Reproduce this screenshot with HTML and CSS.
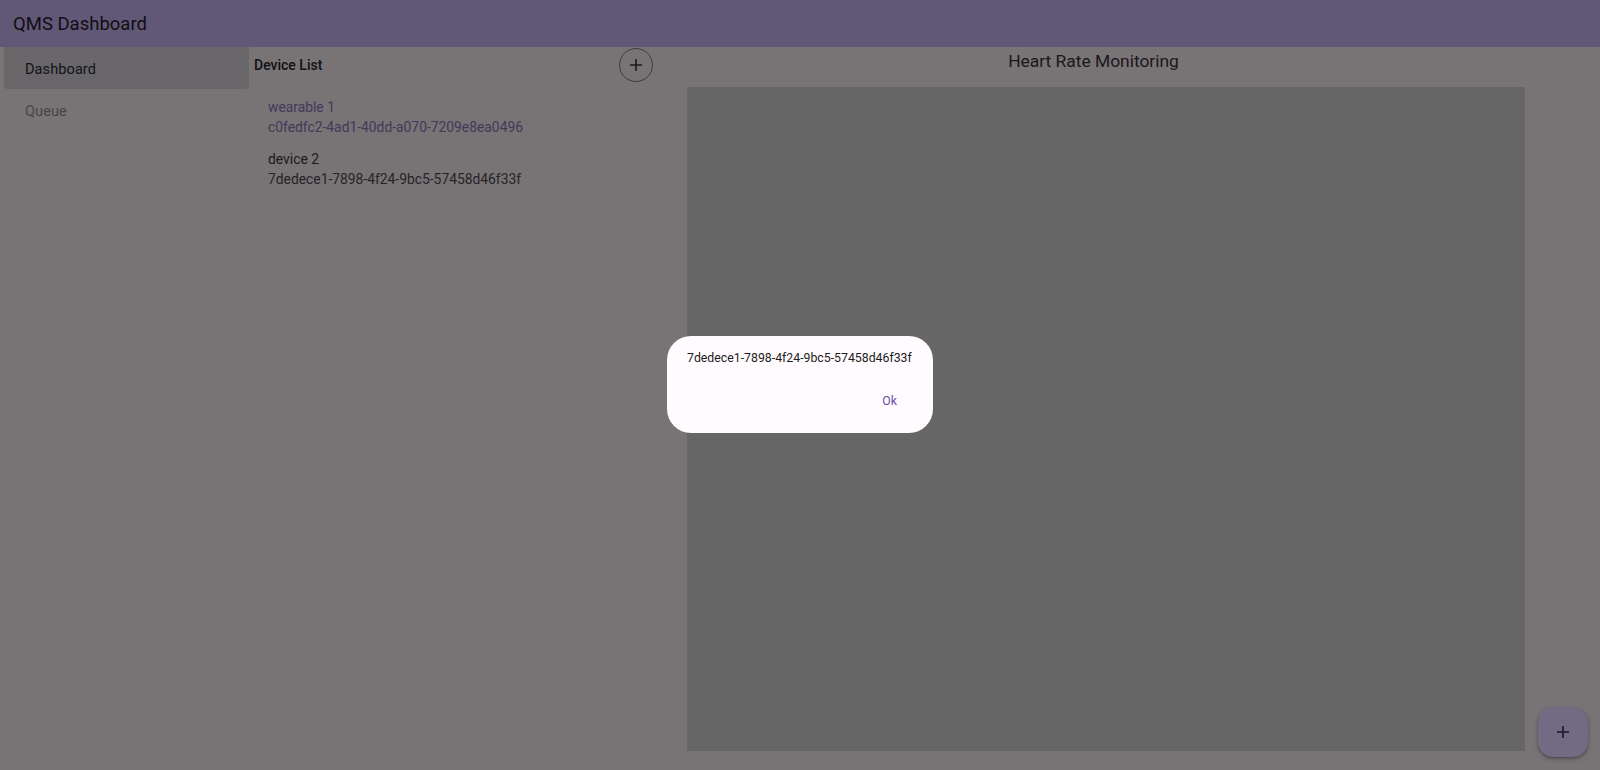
FILE: index.html
```html
<!DOCTYPE html>
<html lang="en">
<head>
<meta charset="utf-8">
<title>QMS Dashboard</title>
<link rel="stylesheet" href="styles.css">
</head>
<body>
<header class="appbar"><span class="appbar-title">QMS Dashboard</span></header>
<div class="main">
  <nav class="sidebar">
    <div class="nav-item active">Dashboard</div>
    <div class="nav-item">Queue</div>
  </nav>
  <section class="devices">
    <div class="devices-head">
      <span class="devices-title">Device List</span>
      <button class="circle-btn" aria-label="Add device">
        <svg width="14" height="14" viewBox="0 0 14 14"><path d="M7 1v12M1 7h12" stroke="#1b1a1e" stroke-width="1.6" fill="none"/></svg>
      </button>
    </div>
    <ul class="device-list">
      <li class="device selected">
        <div class="device-name">wearable 1</div>
        <div class="device-id">c0fedfc2-4ad1-40dd-a070-7209e8ea0496</div>
      </li>
      <li class="device">
        <div class="device-name">device 2</div>
        <div class="device-id">7dedece1-7898-4f24-9bc5-57458d46f33f</div>
      </li>
    </ul>
  </section>
  <section class="chart-panel">
    <h2 class="chart-title">Heart Rate Monitoring</h2>
    <div class="chart"></div>
  </section>
</div>
<button class="fab" aria-label="Add">
  <svg width="14" height="14" viewBox="0 0 14 14"><path d="M7 1v12M1 7h12" stroke="#1d1530" stroke-width="1.6" fill="none"/></svg>
</button>
<div class="dialog" role="dialog">
  <div class="dialog-content">7dedece1-7898-4f24-9bc5-57458d46f33f</div>
  <div class="dialog-actions"><button class="text-btn">Ok</button></div>
</div>
</body>
</html>
```

FILE: styles.css
```css
* { box-sizing: border-box; }
html, body { margin: 0; padding: 0; }
body {
  width: 1600px;
  height: 770px;
  overflow: hidden;
  background: #787375;
  font-family: Roboto, "Noto Sans", sans-serif;
  color: #141315;
  position: relative;
}
.appbar {
  height: 47px;
  background: #615878;
  display: flex;
  align-items: center;
  padding-left: 13px;
}
.appbar-title {
  font-size: 18.5px;
  color: #0f0e11;
  line-height: 1;
  margin-top: 1px;
}
.main {
  display: flex;
  height: 723px;
}
.sidebar {
  width: 250px;
  flex: none;
  padding: 0 1px 0 4px;
}
.nav-item {
  height: 42px;
  display: flex;
  align-items: center;
  padding: 2px 0 0 21px;
  font-size: 14.5px;
  color: #141315;
  letter-spacing: 0.1px;
}
.nav-item.active {
  background: #686669;
  border-radius: 0 0 4px 4px;
}
.nav-item:not(.active) { color: #48444b; }
.devices {
  width: 410px;
  flex: none;
  padding: 1px 7px 0 4px;
}
.devices-head {
  height: 34px;
  display: flex;
  align-items: center;
  justify-content: space-between;
}
.devices-title {
  font-size: 14px;
  font-weight: 500;
  color: #111013;
}
.circle-btn {
  width: 34px;
  height: 34px;
  border-radius: 50%;
  border: 1px solid #3e3b41;
  background: transparent;
  padding: 0;
  display: flex;
  align-items: center;
  justify-content: center;
}
.device-list {
  list-style: none;
  margin: 9px 0 0;
  padding: 0;
}
.device {
  padding: 6px 0 6px 14px;
  font-size: 13.85px;
}
.device-name, .device-id { line-height: 20px; color: #1a191c; }
.device-id { color: #262428; }
.device.selected .device-name, .device.selected .device-id { color: #42395a; }
.chart-panel {
  width: 867px;
  flex: none;
  padding-top: 1px;
  display: flex;
  flex-direction: column;
}
.chart-title {
  margin: 0;
  text-align: center;
  font-weight: 400;
  font-size: 17.4px;
  line-height: 26px;
  color: #19181b;
}
.chart {
  margin: 13px 2px 0 27px;
  height: 664px;
  background: #666666;
}
.fab {
  position: absolute;
  right: 12px;
  bottom: 13px;
  width: 50px;
  height: 50px;
  border-radius: 15px;
  border: none;
  background: #716b83;
  box-shadow: 0 2px 4px rgba(0,0,0,0.25), 0 1px 2px rgba(0,0,0,0.2);
  display: flex;
  align-items: center;
  justify-content: center;
  padding: 0;
}
.dialog {
  position: absolute;
  left: 667px;
  top: 336px;
  width: 266px;
  height: 97px;
  background: #fffbfe;
  border-radius: 24px;
  padding: 14px 20px 16px 20px;
  display: flex;
  flex-direction: column;
}
.dialog-content {
  font-size: 12.3px;
  line-height: 16px;
  color: #1d1b20;
  white-space: nowrap;
}
.dialog-actions {
  margin-top: 19px;
  display: flex;
  justify-content: flex-end;
  padding-right: 4px;
}
.text-btn {
  height: 32px;
  padding: 0 12px;
  border: none;
  background: transparent;
  font-family: Roboto, "Noto Sans", sans-serif;
  font-size: 12.3px;
  color: #6750a4;
}
```
